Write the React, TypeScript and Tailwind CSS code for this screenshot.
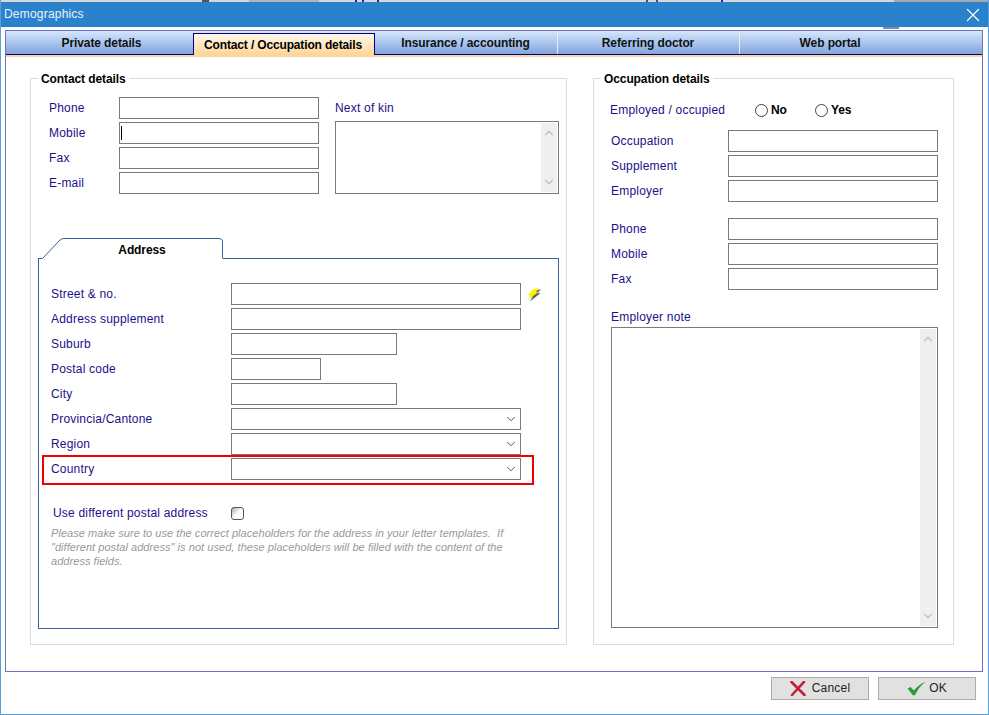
import { ChevronDown, ChevronUp, X } from "lucide-react";

const font = { fontFamily: '"Liberation Sans", Arial, sans-serif' };

const Field = ({ w, select }: { w: string; select?: boolean }) => (
  <div className={`${w} h-[22px] border border-[#7a7a7a] bg-white flex items-center justify-end pr-[2px]`}>
    {select && <ChevronDown size={14} strokeWidth={1.5} className="text-[#444]" />}
  </div>
);

const Label = ({ children, className }: { children: string; className: string }) => (
  <div className={`${className} text-[12px] text-[#1c0f8c] tracking-[0.2px]`}>{children}</div>
);

const FormRow = ({ label, labelW, w, select }: { label: string; labelW: string; w: string; select?: boolean }) => (
  <div className="flex items-center h-[22px]">
    <Label className={labelW}>{label}</Label>
    <Field w={w} select={select} />
  </div>
);

const ScrollArea = ({ className }: { className: string }) => (
  <div className={`${className} border border-[#7a7a7a] bg-white flex justify-end p-[1px]`}>
    <div className="w-[16px] bg-[#efefef] flex flex-col items-center justify-between py-[3px]">
      <ChevronUp size={14} strokeWidth={2.5} className="text-[#c4c4c4]" />
      <ChevronDown size={14} strokeWidth={2.5} className="text-[#c4c4c4]" />
    </div>
  </div>
);

const Radio = ({ label, className }: { label: string; className: string }) => (
  <div className={`${className} flex items-center gap-[3px]`}>
    <div className="w-[13px] h-[13px] rounded-full border border-[#444] bg-white" />
    <span className="text-[12px] font-bold text-black tracking-[-0.1px]">{label}</span>
  </div>
);

const tabs = ["Private details", "Contact / Occupation details", "Insurance / accounting", "Referring doctor", "Web portal"];

const App = () => (
  <div style={font} className="w-[989px] h-[715px] bg-white flex flex-col border-x border-b border-[#5a9fd8] overflow-hidden relative">
    {/* bits of the window behind */}
    <div className="h-[2px] bg-[#d8d8d8] shrink-0 relative">
      <div className="absolute left-[201px] top-0 w-[7px] h-[2px] bg-[#555]" />
      <div className="absolute left-[248px] top-0 w-[70px] h-[2px] bg-[#b4b4b4]" />
      <div className="absolute left-[354px] top-0 w-[2px] h-[2px] bg-[#2b22a8]" />
      <div className="absolute left-[361px] top-0 w-[2px] h-[2px] bg-[#2b22a8]" />
      <div className="absolute left-[376px] top-0 w-[2px] h-[2px] bg-[#2b22a8]" />
      <div className="absolute left-[645px] top-0 w-[2px] h-[2px] bg-[#7a2a9a]" />
      <div className="absolute left-[655px] top-0 w-[2px] h-[2px] bg-[#7a2a9a]" />
      <div className="absolute left-[720px] top-0 w-[2px] h-[2px] bg-[#2b22a8]" />
      <div className="absolute left-[893px] top-0 w-[95px] h-[2px] bg-[#a8a8a8]" />
    </div>

    <div className="h-[25px] bg-[#2a82cd] text-[#e9f2fb] text-[12px] flex items-center justify-between pl-[3px] pr-[4px] shrink-0 tracking-[0.2px]">
      <span className="mb-[2px]">Demographics</span>
      <X size={22} strokeWidth={1.3} className="text-white" />
    </div>
    <div className="absolute left-[882px] top-[27px] w-[16px] h-[2px] bg-[#7c8ea3]" />

    <div className="ml-[4px] mr-[5px] mt-[3px] h-[642px] border border-[#6b74c0] flex flex-col shrink-0">
      {/* tab strip */}
      <div className="h-[24px] shrink-0 pl-[5px] flex bg-gradient-to-b from-[#d6e7fc] to-[#82a5dd] border-b border-[#00007f]">
        {tabs.map((t, i) =>
          i === 1 ? (
            <div key={t} className="w-[182px] h-[22px] mt-[2px] -mb-[1px] z-10 flex items-center justify-center pr-[2px] text-[12px] font-bold tracking-[-0.15px] text-black border border-b-0 border-[#00007f] bg-gradient-to-b from-[#fff8ec] to-[#fdd596]">
              {t}
            </div>
          ) : (
            <div key={t} className={`w-[182px] flex items-center justify-center pr-[1px] text-[12px] font-bold tracking-[-0.1px] text-[#111] relative ${i > 2 ? "border-l border-[#e6eefb]" : ""}`}>
              {t}
            </div>
          )
        )}
      </div>
      <div className="h-[2px] bg-[#fdd69b] shrink-0" />

      <div className="flex flex-1 pl-[24px] pr-[28px] pt-[21px] pb-[26px] justify-between">
        {/* contact */}
        <div className="w-[537px] border border-[#dcdcdc] relative pl-[18px] pr-[7px] pt-[18px] pb-[15px]">
          <div className="absolute -top-[7px] left-[7px] bg-white px-[3px] text-[12px] font-bold tracking-[-0.1px] text-black leading-[14px]">Contact details</div>
          <div className="flex">
            <div className="flex flex-col gap-[3px] w-[286px]">
              <FormRow label="Phone" labelW="w-[70px]" w="w-[200px]" />
              <div className="flex items-center h-[22px] relative">
                <Label className="w-[70px]">Mobile</Label>
                <Field w="w-[200px]" />
                <div className="absolute left-[72px] top-[4px] w-[1px] h-[14px] bg-black" />
              </div>
              <FormRow label="Fax" labelW="w-[70px]" w="w-[200px]" />
              <FormRow label="E-mail" labelW="w-[70px]" w="w-[200px]" />
            </div>
            <div>
              <Label className="h-[24px] leading-[22px]">Next of kin</Label>
              <ScrollArea className="w-[224px] h-[73px]" />
            </div>
          </div>

          {/* address */}
          <div className="-ml-[11px] mt-[44px] relative w-[521px] h-[391px] pt-[20px]">
            <svg className="absolute left-0 top-0" width="186" height="21" viewBox="0 0 186 21" fill="none">
              <path d="M0.5 20.5H4.5L22 2Q23.5 0.5 26 0.5H181Q184.5 0.5 184.5 3V20.5" stroke="#3f5da3" />
            </svg>
            <div className="absolute left-[4px] top-[3px] w-[180px] text-center text-[12px] font-bold tracking-[-0.1px] text-black leading-[18px] pl-[22px] pr-[2px]">Address</div>
            <div className="h-[371px] border border-[#3f5da3] border-t-0 relative px-[12px] pt-[25px]">
              <div className="absolute top-0 left-[184px] right-[-1px] h-[1px] bg-[#3f5da3]" />
              <div className="flex flex-col gap-[3px]">
                <div className="flex items-center relative">
                  <FormRow label="Street & no." labelW="w-[180px]" w="w-[290px]" />
                  <svg className="ml-[5px]" width="16" height="16" viewBox="0 0 16 16">
                    <path d="M6 4 13 1.500 10 6 13 5.500 2 14 5 9 1.500 10Z" fill="#2c2c2c" opacity=".75" transform="translate(1.800 1.400)" />
                    <path d="M6 4 13 1.500 10 6 13 5.500 2 14 5 9 1.500 10Z" fill="#fcf200" />
                  </svg>
                </div>
                <FormRow label="Address supplement" labelW="w-[180px]" w="w-[290px]" />
                <FormRow label="Suburb" labelW="w-[180px]" w="w-[166px]" />
                <FormRow label="Postal code" labelW="w-[180px]" w="w-[90px]" />
                <FormRow label="City" labelW="w-[180px]" w="w-[166px]" />
                <FormRow label="Provincia/Cantone" labelW="w-[180px]" w="w-[290px]" select />
                <FormRow label="Region" labelW="w-[180px]" w="w-[290px]" select />
                <FormRow label="Country" labelW="w-[180px]" w="w-[290px]" select />
              </div>
              <div className="absolute left-[3px] top-[197px] w-[492px] h-[30px] border-2 border-[#f00000]" />
              <div className="flex items-center mt-[24px] pl-[2px]">
                <Label className="w-[178px]">Use different postal address</Label>
                <div className="w-[13px] h-[13px] rounded-[3px] border border-[#555] bg-gradient-to-br from-[#aaa] via-white to-white" />
              </div>
              <p className="mt-[4px] w-[480px] text-[11px] leading-[14px] italic text-[#999] tracking-[0.05px]">
                Please make sure to use the correct placeholders for the address in your letter templates.&nbsp; If "different postal address" is not used, these placeholders will be filled with the content of the address fields.
              </p>
            </div>
          </div>
        </div>

        {/* occupation */}
        <div className="w-[361px] border border-[#dcdcdc] relative pl-[17px] pr-[15px] pt-[20px]">
          <div className="absolute -top-[7px] left-[7px] bg-white px-[3px] text-[12px] font-bold tracking-[-0.1px] text-black leading-[14px]">Occupation details</div>
          <div className="flex items-center h-[22px]">
            <Label className="w-[145px] -ml-[1px]">Employed / occupied</Label>
            <Radio label="No" className="w-[60px]" />
            <Radio label="Yes" className="" />
          </div>
          <div className="flex flex-col gap-[3px] mt-[9px]">
            <FormRow label="Occupation" labelW="w-[117px]" w="w-[210px]" />
            <FormRow label="Supplement" labelW="w-[117px]" w="w-[210px]" />
            <FormRow label="Employer" labelW="w-[117px]" w="w-[210px]" />
          </div>
          <div className="flex flex-col gap-[3px] mt-[16px]">
            <FormRow label="Phone" labelW="w-[117px]" w="w-[210px]" />
            <FormRow label="Mobile" labelW="w-[117px]" w="w-[210px]" />
            <FormRow label="Fax" labelW="w-[117px]" w="w-[210px]" />
          </div>
          <Label className="mt-[19px] h-[18px] leading-[16px]">Employer note</Label>
          <ScrollArea className="w-[327px] h-[301px]" />
        </div>
      </div>
    </div>

    <div className="flex justify-end gap-[9px] pr-[12px] pt-[5px]">
      <button className="w-[98px] h-[23px] pb-[1px] bg-[#e1e1e1] border border-[#adadad] flex items-center justify-center gap-[6px] text-[12px] text-[#222] tracking-[0.2px]">
        <svg width="16" height="15" viewBox="0 0 16 15">
          <path d="M1.500 1 L14.500 14 M14 .8 L2 14" stroke="#c2203c" strokeWidth="2.600" strokeLinecap="round" fill="none" />
        </svg>
        Cancel
      </button>
      <button className="w-[98px] h-[23px] pb-[1px] bg-[#e1e1e1] border border-[#adadad] flex items-center justify-center gap-[3px] text-[12px] text-[#222] tracking-[0.2px]">
        <svg width="19" height="15" viewBox="0 0 18 14">
          <path d="M0.500 7 L3.500 5.500 L6.500 9 C9 5.500 12.500 2.500 17.500 0.500 C13 4 10 8 7.500 13.500 L5.500 13.500 Z" fill="#2f9a3e" />
        </svg>
        OK
      </button>
    </div>
  </div>
);

export default App;
